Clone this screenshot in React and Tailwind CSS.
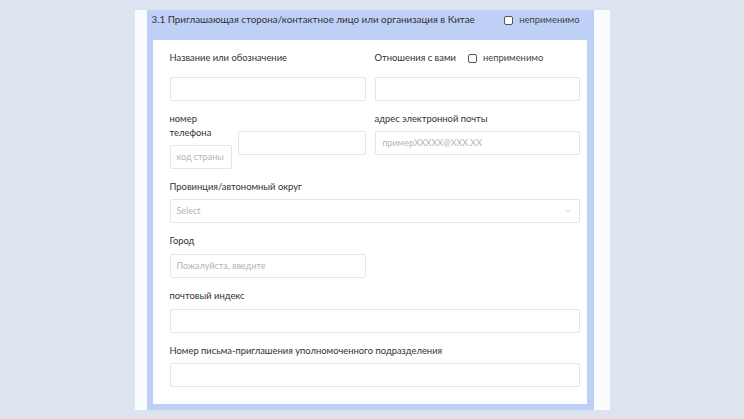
import React from 'react';

const font = { fontFamily: 'Lato, Roboto, sans-serif' };

function Label({ children, className = '' }) {
  return <div className={`text-[9.4px] leading-[14px] text-[#333] ${className}`}>{children}</div>;
}

function Input({ placeholder, className = '' }) {
  return (
    <div className={`h-[24px] rounded-[2px] border border-[#e3e5e8] bg-white px-[6px] flex items-center whitespace-nowrap overflow-hidden text-[9px] text-[#b3b3b3] ${className}`}>
      {placeholder}
    </div>
  );
}

function Check({ label }) {
  return (
    <div className="flex items-center gap-[6px]">
      <span className="h-[9px] w-[9px] rounded-[2px] border border-[#555] bg-white" />
      <span className="text-[9.4px] text-[#444]">{label}</span>
    </div>
  );
}

export default function App() {
  return (
    <div className="w-[744px] h-[419px] bg-[#dce5ef] flex justify-center pt-[10px]" style={font}>
      <div className="w-[475px] h-[400px] bg-[#fbfcfe] pl-[12px]">
        <div className="w-[447px] h-[400px] bg-[#bfd0f6] flex flex-col">
          <div className="h-[30px] flex items-start pt-[2px] pl-[5px] pr-[14px] justify-between">
            <span className="text-[9.8px] text-[#333] leading-[14px] whitespace-nowrap">
              3.1 Приглашающая сторона/контактное лицо или организация в Китае
            </span>
            <div className="mt-[1px]"><Check label="неприменимо" /></div>
          </div>
          <div className="ml-[6px] w-[434px] h-[364px] bg-white pt-[11px] pl-[17px] pr-[7px]">
            <div className="grid grid-cols-[196px_205px] gap-x-[9px]">
              <div>
                <Label>Название или обозначение</Label>
                <Input className="mt-[12px]" />
              </div>
              <div>
                <div className="flex items-center gap-[12px] h-[14px]">
                  <Label>Отношения с вами</Label>
                  <Check label="неприменимо" />
                </div>
                <Input className="mt-[12px]" />
              </div>
              <div className="mt-[11px] flex gap-[6px]">
                <div className="w-[62px]">
                  <Label>номер<br />телефона</Label>
                  <Input className="mt-[5px]" placeholder="код страны" />
                </div>
                <div className="flex-1 pt-[19px]">
                  <Input />
                </div>
              </div>
              <div className="mt-[11px]">
                <Label>адрес электронной почты</Label>
                <Input className="mt-[5px] px-[7px]" placeholder="примерXXXXX@XXX.XX" />
              </div>
            </div>
            <Label className="mt-[11px]">Провинция/автономный округ</Label>
            <div className="mt-[5px] h-[24px] rounded-[2px] border border-[#e3e5e8] px-[6px] flex items-center justify-between text-[9px] text-[#b3b3b3]">
              <span>Select</span>
              <svg width="8" height="8" viewBox="0 0 10 10" className="mr-[1px]">
                <path d="M2 3.5 L5 6.5 L8 3.5" fill="none" stroke="#c8c8c8" strokeWidth="1" />
              </svg>
            </div>
            <Label className="mt-[11px]">Город</Label>
            <Input className="mt-[6px] w-[196px]" placeholder="Пожалуйста, введите" />
            <Label className="mt-[11px]">почтовый индекс</Label>
            <Input className="mt-[6px]" />
            <Label className="mt-[11px]">Номер письма-приглашения уполномоченного подразделения</Label>
            <Input className="mt-[5px]" />
          </div>
        </div>
      </div>
    </div>
  );
}
